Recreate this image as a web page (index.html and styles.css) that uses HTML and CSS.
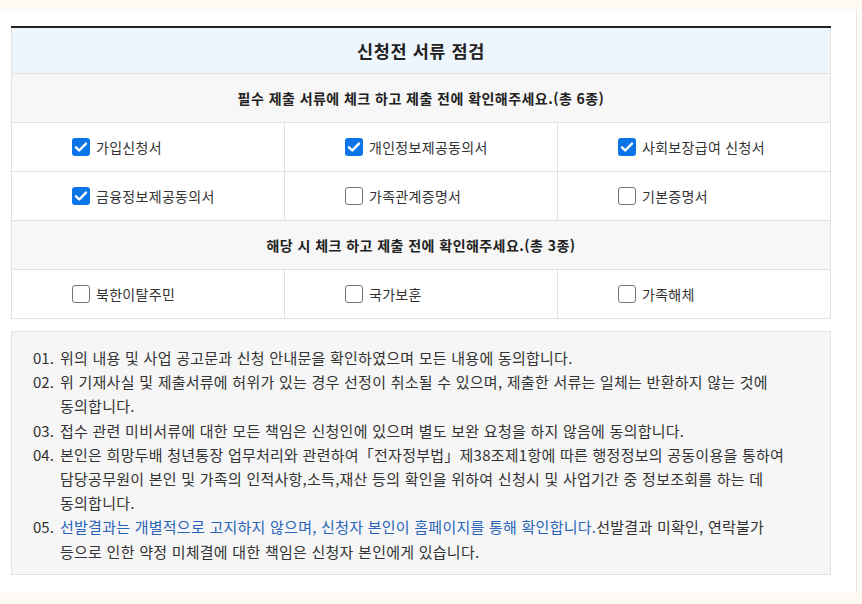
FILE: index.html
```html
<!DOCTYPE html>
<html lang="ko">
<head>
  <meta charset="UTF-8">
  <meta name="viewport" content="width=device-width, initial-scale=1.0">
  <title>신청전 서류 점검</title>
  <link rel="stylesheet" href="styles.css">
</head>
<body>
  <div class="modal">
    <table class="check-table">
      <thead>
        <tr>
          <th colspan="3" class="title">신청전 서류 점검</th>
        </tr>
      </thead>
      <tbody>
        <tr>
          <td colspan="3" class="guide">필수 제출 서류에 체크 하고 제출 전에 확인해주세요.(총 6종)</td>
        </tr>
        <tr>
          <td><label class="chk"><span class="box on"></span>가입신청서</label></td>
          <td><label class="chk"><span class="box on"></span>개인정보제공동의서</label></td>
          <td><label class="chk"><span class="box on"></span>사회보장급여 신청서</label></td>
        </tr>
        <tr>
          <td><label class="chk"><span class="box on"></span>금융정보제공동의서</label></td>
          <td><label class="chk"><span class="box"></span>가족관계증명서</label></td>
          <td><label class="chk"><span class="box"></span>기본증명서</label></td>
        </tr>
        <tr>
          <td colspan="3" class="guide">해당 시 체크 하고 제출 전에 확인해주세요.(총 3종)</td>
        </tr>
        <tr>
          <td><label class="chk"><span class="box"></span>북한이탈주민</label></td>
          <td><label class="chk"><span class="box"></span>국가보훈</label></td>
          <td><label class="chk"><span class="box"></span>가족해체</label></td>
        </tr>
      </tbody>
    </table>

    <div class="agree">
      <p><span class="num">01.</span><span class="txt">위의 내용 및 사업 공고문과 신청 안내문을 확인하였으며 모든 내용에 동의합니다.</span></p>
      <p><span class="num">02.</span><span class="txt">위 기재사실 및 제출서류에 허위가 있는 경우 선정이 취소될 수 있으며, 제출한 서류는 일체는 반환하지 않는 것에 동의합니다.</span></p>
      <p><span class="num">03.</span><span class="txt">접수 관련 미비서류에 대한 모든 책임은 신청인에 있으며 별도 보완 요청을 하지 않음에 동의합니다.</span></p>
      <p><span class="num">04.</span><span class="txt">본인은 희망두배 청년통장 업무처리와 관련하여「전자정부법」제38조제1항에 따른 행정정보의 공동이용을 통하여 담당공무원이 본인 및 가족의 인적사항,소득,재산 등의 확인을 위하여 신청시 및 사업기간 중 정보조회를 하는 데 동의합니다.</span></p>
      <p><span class="num">05.</span><span class="txt"><span class="blue">선발결과는 개별적으로 고지하지 않으며, 신청자 본인이 홈페이지를 통해 확인합니다.</span>선발결과 미확인, 연락불가 등으로 인한 약정 미체결에 대한 책임은 신청자 본인에게 있습니다.</span></p>
    </div>
  </div>
</body>
</html>
```

FILE: styles.css
```css
body {
  margin: 0;
  padding: 10px 0 0;
  background-color: #fdfbf4;
  font-family: "Noto Sans CJK KR", "Noto Sans", sans-serif;
  color: #333;
}
.modal {
  width: 857px;
  height: 583px;
  box-sizing: border-box;
  background-color: #fff;
  border-right: 1px solid #e6e6e6;
  padding: 16px 0 0 11px;
}
.check-table {
  width: 820px;
  border-collapse: collapse;
  table-layout: fixed;
  border-top: 2px solid #222;
}
.check-table th,
.check-table td {
  border: 1px solid #e2e2e2;
  padding: 0;
}
.check-table tr:first-child th {
  border-top: 2px solid #222;
}
.title {
  height: 45px;
  background-color: #eef6fd;
  font-size: 17.5px;
  font-weight: bold;
  letter-spacing: 0.6px;
  color: #222;
  text-align: center;
}
.guide {
  height: 48px;
  background-color: #f7f7f7;
  font-size: 14px;
  font-weight: bold;
  letter-spacing: 0.45px;
  color: #222;
  text-align: center;
}
.check-table td:not(.guide) {
  height: 48px;
  padding-left: 60px;
}
.chk {
  display: flex;
  align-items: center;
  gap: 6px;
  font-size: 14px;
  letter-spacing: 0.3px;
  color: #333;
}
.box {
  width: 16px;
  height: 16px;
  border: 1px solid #767676;
  border-radius: 3px;
  background-color: #fff;
}
.box.on {
  width: 18px;
  height: 18px;
  border: none;
  background-color: #0b75e8;
  background-image: url("data:image/svg+xml,%3Csvg xmlns='http://www.w3.org/2000/svg' viewBox='0 0 18 18'%3E%3Cpath d='M4 9.3l3.2 3.2L14 5.6' fill='none' stroke='%23fff' stroke-width='2.4' stroke-linecap='round' stroke-linejoin='round'/%3E%3C/svg%3E");
}
.agree {
  margin-top: 12px;
  width: 820px;
  box-sizing: border-box;
  background-color: #f6f6f6;
  border: 1px solid #e2e2e2;
  padding: 14px 22px 10px 21px;
  font-size: 15px;
  letter-spacing: 0.25px;
  line-height: 24.2px;
  color: #333;
  word-break: keep-all;
}
.agree p {
  display: flex;
  margin: 0;
}
.num {
  flex: 0 0 27px;
  letter-spacing: 0;
}
.txt {
  flex: 1;
}
.blue {
  color: #2a64b8;
}
```
